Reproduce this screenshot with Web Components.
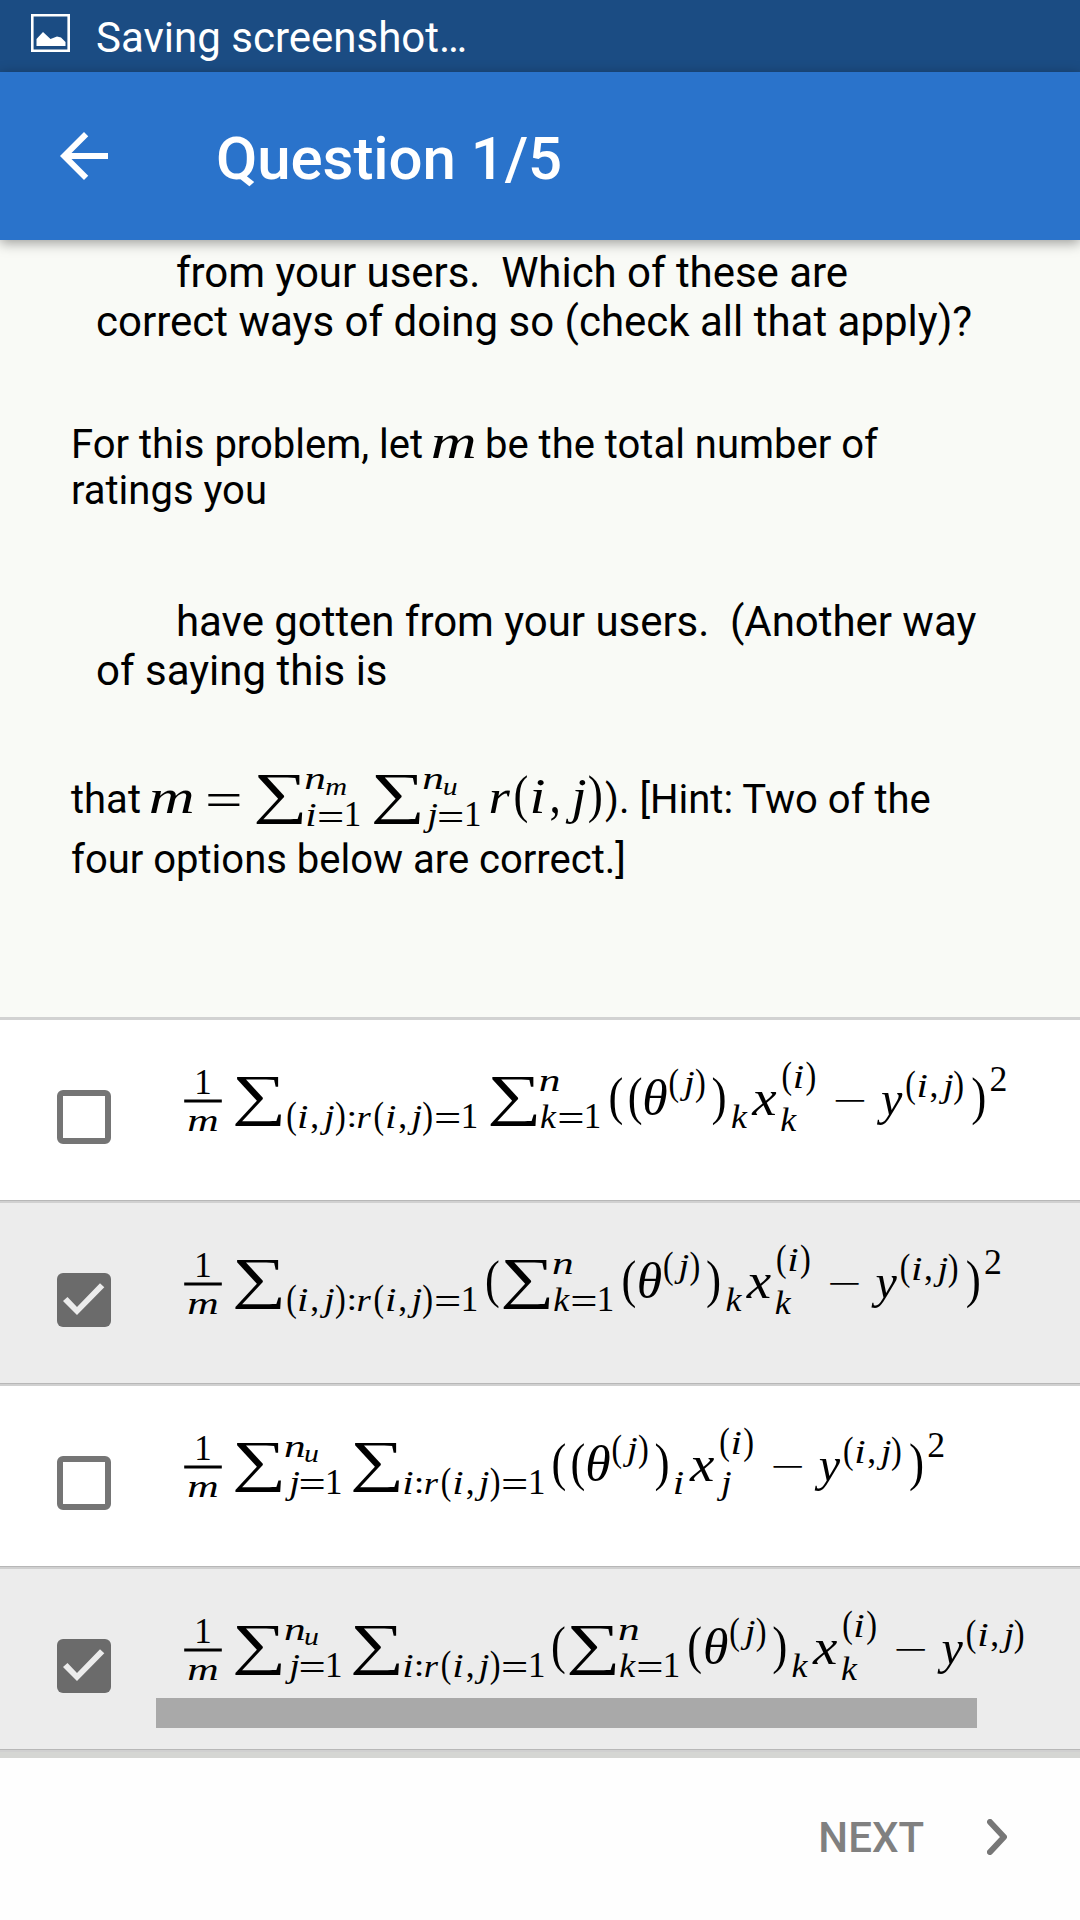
<!DOCTYPE html>
<html lang="en">
<head>
<meta charset="utf-8">
<title>Question 1/5</title>
<style>
html,body{margin:0;padding:0}
body{width:1080px;height:1920px;overflow:hidden;font-family:Roboto,"Noto Sans",sans-serif;color:#000;background:#fff}
</style>
</head>
<body>
<quiz-screen></quiz-screen>
<script>
const css = s => '<style>*{box-sizing:border-box}' + s + '</style>';
const define = (name, html, ready) => customElements.define(name, class extends HTMLElement {
  connectedCallback() {
    if (this.shadowRoot) return;
    this.attachShadow({mode: 'open'}).innerHTML = typeof html === 'function' ? html(this) : html;
    if (ready) ready.call(this, this.shadowRoot);
  }
});

/* Glyph kinds: character, italic, ink width, ink top and ink bottom from the baseline, left inset. */
const SERIF = '"Liberation Serif"';
const K = {
  S: ['∑', 0, 46, -38, 11, -0.8], '(': ['(', 0, 11.8, -38, 11], ')': [')', 0, 11.8, -38, 11],
  th: ['θ', 1, 22, -35, 0.3], x: ['x', 1, 25, -23, 0, -0.5], y: ['y', 1, 25.5, -23, 10.3, -2],
  M: ['m', 1, 41.3, -23, 0], R: ['r', 1, 19.5, -23, 0], I: ['i', 1, 11.2, -33.7, 0, 1.3],
  C: [',', 0, 7, -6, 7.5], J: ['j', 1, 19.8, -33.7, 10.3], E: ['=', 0, 31.7, -18.6, -6.6],
  '-': ['−', 0, 29, -15, -13, -0.5],
  '<': ['(', 0, 8.4, -25.7, 8.7], '>': [')', 0, 8.4, -25.7, 8.7],
  i: ['i', 1, 8, -22.6, 0, 1.1], ',': [',', 0, 5.5, -3.8, 5.3], j: ['j', 1, 14, -22.6, 7, 0.4],
  ':': [':', 0, 4.8, -15, 0], r: ['r', 1, 13, -15.2, 0], '=': ['=', 0, 23, -13.6, -4.3],
  1: ['1', 0, 12.4, -23, 0], 2: ['2', 0, 14.5, -23, 0], n: ['n', 1, 18.4, -15.3, 0],
  k: ['k', 1, 15.6, -23, 0], m: ['m', 1, 28.3, -15.2, 0],
  u3: ['u', 1, 12.5, -11.7, 0], m3: ['m', 1, 19.7, -11.7, 0]
};
/* A formula is a list of groups: baseline shift, then kind/left-edge pairs. */
const FRAC = [[-21, '1', 197.3], ['bar'], [16, 'm', 188.7]];
const TH = d => [[0, 'th', 644.7 + d], [-21, '<', 669.8 + d, 'j', 679.5 + d, '>', 696 + d], [0, ')', 712.9 + d]];
const XY = (d, sub, end) => [[0, 'x', 752 + d], [-27.4, '<', 782.8 + d, 'i', 793.8 + d, '>', 806.5 + d], sub,
  [0, '-', 835.8 + d, 'y', 878.8 + d], [-18.2, '<', 906.4 + d, 'i', 917.7 + d, ',', 930.8 + d, 'j', 938.4 + d, '>', 954.2 + d],
  ...(end ? [[0, ')', 972.5 + d], [-24, '2', 991 + d]] : [])];
const SUMIJ = [[0, 'S', 235.9], [12.8, '<', 287.5, 'i', 298.2, ',', 311.6, 'j', 319.3, '>', 335.9, ':', 349.5, 'r', 358,
  '<', 374.7, 'i', 386.2, ',', 399.5, 'j', 407, '>', 423.2, '=', 436.3, '1', 463.7]];
const SUMU = [[0, 'S', 235.9], [-24, 'n', 285.4], [-18.6, 'u3', 305.4], [12.8, 'j', 284.6, '=', 300.6, '1', 327.9],
  [0, 'S', 353.9], [12.8, 'i', 403.3, ':', 416.7, 'r', 425.3, '<', 442.1, 'i', 453.3, ',', 467, 'j', 474.2, '>', 490.7, '=', 503.1, '1', 531]];
const SUMK = x => [[0, 'S', x], [-24, 'n', x + 49.3], [12.8, 'k', x + 50, '=', x + 68.4, '1', x + 95.7]];
const FORMULAS = {
  a: [...FRAC, ...SUMIJ, ...SUMK(491), [0, '(', 610.2, '(', 629.5], ...TH(0), [12.8, 'k', 731.9], ...XY(0, [16, 'k', 781.2], 1)],
  b: [...FRAC, ...SUMIJ, [0, '(', 486.7], ...SUMK(504.1), [0, '(', 623.3], ...TH(-5.5), [12.8, 'k', 726.4], ...XY(-5.5, [16, 'k', 775.7], 1)],
  c: [...FRAC, ...SUMU, [0, '(', 553.4, '(', 572.4], ...TH(-57), [12.8, 'i', 674], ...XY(-62.2, [12.8, 'j', 716.3], 1)],
  d: [...FRAC, ...SUMU, [0, '(', 552.8], ...SUMK(570.1), [0, '(', 689.1], ...TH(60.6), [12.8, 'k', 792.5], ...XY(60.6, [16, 'k', 841.8], 0)],
  m: [[0, 'M', 0]],
  total: [[0, 'M', 0, 'E', 57], [0, 'S', 106], [-24, 'n', 154.7], [-18.2, 'm3', 175.3], [13.3, 'i', 155.3, '=', 168.3, '1', 195.7],
    [0, 'S', 223.7], [-24, 'n', 272.7], [-18.2, 'u3', 293], [13.3, 'j', 271.7, '=', 288.3, '1', 316],
    [0, 'R', 339.7, '(', 364.3, 'I', 380.3, 'C', 400, 'J', 414.5, ')', 438]]
};
const pen = document.createElement('canvas').getContext('2d');
function glyph(kind, x, base) {
  const [ch, it, w, top, bot, inset = 0] = K[kind];
  pen.font = (it ? 'italic ' : '') + '200px ' + SERIF;
  const m = pen.measureText(ch);
  const sx = w / (m.actualBoundingBoxRight + m.actualBoundingBoxLeft);
  const sy = (bot - top) / (m.actualBoundingBoxAscent + m.actualBoundingBoxDescent);
  const tx = x + inset + m.actualBoundingBoxLeft * sx, ty = base + top + m.actualBoundingBoxAscent * sy;
  return `<text font-size="200"${it ? ' font-style="italic"' : ''} transform="matrix(${sx} 0 0 ${sy} ${tx} ${ty})">${ch}</text>`;
}
define('math-run', css(`:host{display:inline-block;height:1px;font-family:"Liberation Serif",serif}
  svg{display:block;width:100%;height:1px;overflow:visible}`) + '<svg fill="currentColor"></svg>', function (root) {
  const off = +(this.getAttribute('origin') || 0);
  root.querySelector('svg').innerHTML = FORMULAS[this.getAttribute('name')].map(([shift, ...g]) => {
    if (shift === 'bar') return `<rect x="${184.2 - off}" y="-14.5" width="37.6" height="3"/>`;
    let out = '';
    for (let i = 0; i < g.length; i += 2) out += glyph(g[i], g[i + 1] - off, shift + 1);
    return out;
  }).join('');
});

define('status-bar', css(`:host{display:flex;height:72px;background:#1b4c83;color:#fff;padding-left:31px;font-size:42px;line-height:49px}
  svg{display:block;margin:14px 26px 0 0;flex:none} span{margin-top:13px}`) +
  `<svg width="39" height="38" viewBox="0 0 39 38"><path d="M1.3 1.3H37.7V36.7H1.3Z" fill="none" stroke="#fff" stroke-width="2.6"/><path d="M5.5 32V25L12 18L19.5 25L26 22.5L30 23.5L34.5 28V32Z" fill="#fff"/></svg><span><slot></slot></span>`);

define('app-bar', css(`:host{display:flex;height:168px;background:#2a73cb;color:#fff;padding-left:48px;position:relative;z-index:1;box-shadow:0 3px 12px rgba(0,0,0,.38)}
  svg{display:block;margin-top:48px} h1{margin:52px 0 0 96px;font-size:60px;line-height:70px;font-weight:500;white-space:nowrap;letter-spacing:-.08px}`) +
  `<svg width="72" height="72" viewBox="0 0 24 24" fill="#fff"><path d="M20 11H7.83l5.59-5.59L12 4l-8 8 8 8 1.41-1.41L7.83 13H20v-2z"/></svg><h1><slot></slot></h1>`);

define('question-body', css(`:host{display:block;height:777px;background:#f9faf6;padding-top:8px;white-space:pre}
  .q{font-size:42px;line-height:49px;padding-left:96px} .q div:first-child{padding-left:80px;letter-spacing:-.04px}
  .p{font-size:40px;line-height:46px;padding-left:71px}
  .gap1{margin-top:76px}.gap2{margin-top:83px}.gap3{margin-top:82px}
  .line{display:flex;align-items:baseline}.tall{height:60px}
  .t1{width:362px}.t2{width:80px} .m1{width:52px}.m2{width:454px}`) +
  `<div class="q"><div>from your users.&nbsp; Which of these are</div><div>correct ways of doing so (check all that apply)?</div></div>
<div class="p gap1"><div class="line"><span class="t1">For this problem, let </span><math-run class="m1" name="m"></math-run><span>be the total number of</span></div><div>ratings you</div></div>
<div class="q gap2"><div>have gotten from your users.&nbsp; (Another way</div><div>of saying this is</div></div>
<div class="p gap3"><div class="line tall"><span class="t2">that </span><math-run class="m2" name="total"></math-run><span>). [Hint: Two of the</span></div><div>four options below are correct.]</div></div>`.replace(/\n/g, ''));

define('check-box', css(`:host{display:block;width:54px;height:54px;border:6px solid #757575;border-radius:6px}
  svg{display:none} :host([checked]){border:0;background:#6b6b6b} :host([checked]) svg{display:block}`) +
  `<svg width="54" height="54"><path d="M6 28L10.5 24L20 34L43 10.3L47.3 14.3L20 42Z" fill="#ececec"/></svg>`);

define('answer-option', el => css(`:host{display:block;height:183px;background:#fff;border-bottom:2px solid #d0d0d0}
  :host([checked]){background:#ececec}
  .row{display:flex;align-items:flex-start;height:181px;border-bottom:1px solid #b7b7b7;padding-left:57px}
  check-box{margin-top:70px;flex:none} .f{margin-left:45px;width:821px;height:180px;padding-top:94px;line-height:0}
  math-run{display:block;width:821px} .bar{height:30px;margin-top:34px;background:#a9a9a9;display:none}
  :host([scroll]) .bar{display:block}`) +
  `<div class="row"><check-box${el.hasAttribute('checked') ? ' checked' : ''}></check-box><div class="f"><math-run name="${el.getAttribute('formula')}" origin="156"></math-run><div class="bar"></div></div></div>`);

define('quiz-footer', css(`:host{display:flex;height:168px;border-top:6px solid #d5d6d3;background:#fefefe;color:#808080;justify-content:flex-end;padding-right:73px;font-size:42px;font-weight:500;line-height:49px}
  span{margin-top:55px} svg{margin:61px 0 0 63px;flex:none}`) +
  `<span><slot></slot></span><svg width="20" height="36" viewBox="0 0 20 36" fill="none" stroke="#777" stroke-width="6" stroke-linecap="round" stroke-linejoin="round"><path d="M3 3L17 18L3 33"/></svg>`);

define('quiz-screen', css(`:host{display:flex;flex-direction:column;width:1080px;height:1920px} main{border-top:3px solid #d2d2d2}`) +
  `<status-bar>Saving screenshot…</status-bar><app-bar>Question 1/5</app-bar><question-body></question-body>
<main><answer-option formula="a"></answer-option><answer-option formula="b" checked></answer-option><answer-option formula="c"></answer-option><answer-option formula="d" checked scroll></answer-option></main>
<quiz-footer>NEXT</quiz-footer>`);
</script>
</body>
</html>
